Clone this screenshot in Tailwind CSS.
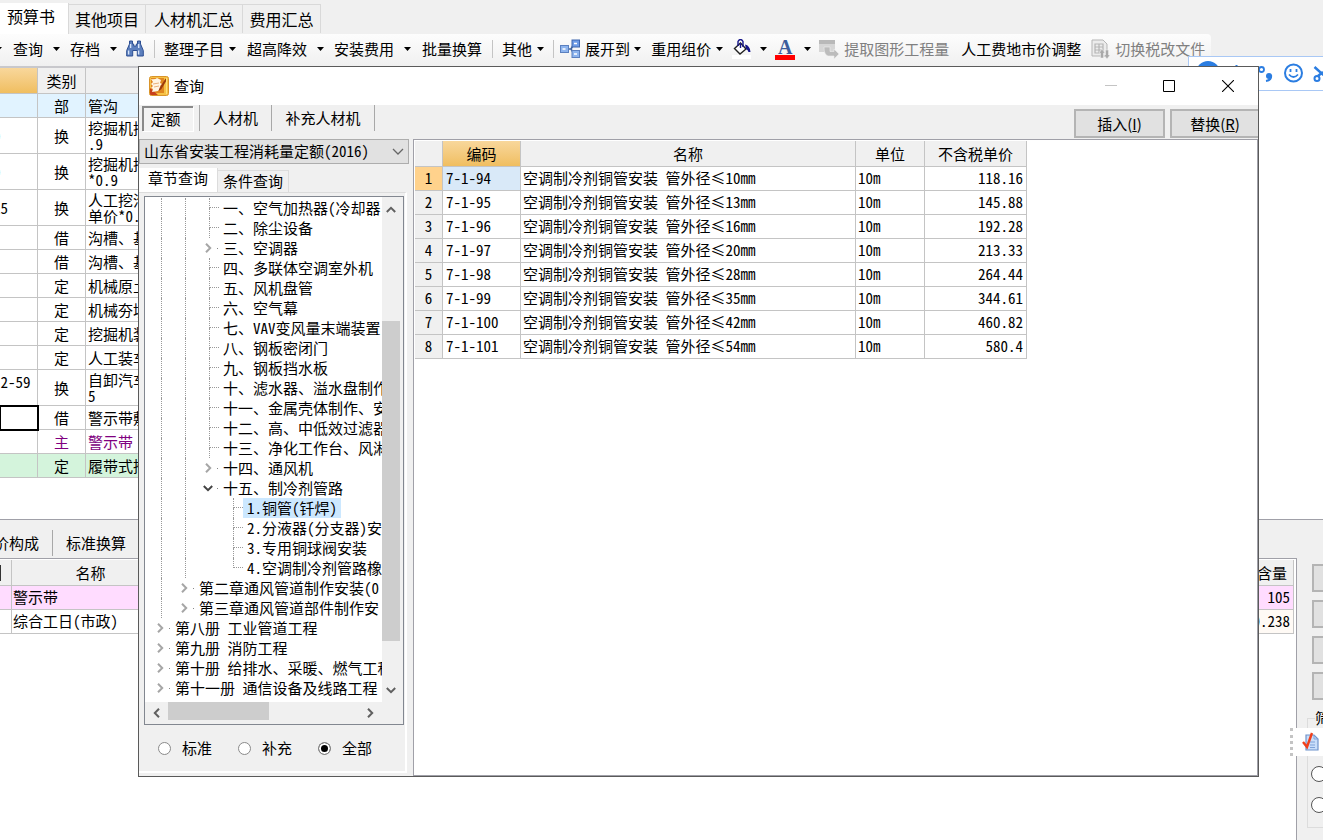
<!DOCTYPE html>
<html lang="zh-CN">
<head>
<meta charset="utf-8">
<title>查询</title>
<script src="https://cdn.jsdelivr.net/npm/@tailwindcss/browser@4"></script>
</head>
<body class="bg-[#f0f0f0] font-['Noto_Sans_CJK_SC',sans-serif] text-[15px] leading-5 text-black">
<svg class="hidden" aria-hidden="true">
  <symbol id="caret" viewBox="0 0 7 4"><path d="M0 0h7L3.5 4z"/></symbol>
  <symbol id="chev" viewBox="0 0 10 10"><path d="M3 0.8 7.2 5 3 9.2" fill="none" stroke="currentColor" stroke-width="2"/></symbol>
</svg>
<div class="relative flex min-h-screen w-full flex-col overflow-hidden">

  <!-- page tabs -->
  <nav class="flex h-[34px] items-end text-[16px]">
    <button class="h-[31px] w-[69px] border-r border-[#d9d9d9] bg-white pr-[6px] pb-[6px] whitespace-nowrap">预算书</button>
    <button class="mb-px h-[29px] w-[77px] border-t border-r border-[#d9d9d9] whitespace-nowrap">其他项目</button>
    <button class="mb-px h-[29px] w-[97px] border-t border-r border-[#d9d9d9] whitespace-nowrap">人材机汇总</button>
    <button class="mb-px h-[29px] w-[78px] border-t border-r border-[#d9d9d9] whitespace-nowrap">费用汇总</button>
  </nav>

  <!-- toolbar -->
  <div class="flex h-8 items-center self-start rounded-r bg-linear-to-b from-[#fdfdfd] to-[#f0f0f0] pr-[6px] pb-[2px] whitespace-nowrap" role="toolbar">
    <svg class="-ml-[5px] h-1 w-[7px]"><use href="#caret"/></svg>
    <button class="ml-[11px] flex items-center gap-[10px]">查询<svg class="h-1 w-[7px]"><use href="#caret"/></svg></button>
    <button class="ml-[10px] flex items-center gap-[10px]">存档<svg class="h-1 w-[7px]"><use href="#caret"/></svg></button>
    <button class="ml-2" aria-label="查找">
      <svg class="block h-5 w-5" viewBox="0 0 20 20"><path d="M4.5 2h3v3h1.2v2h2.600V5h1.200V2h3v3l2.800 6.500V17h-6v-5.500H7.700V17h-6v-5.500L4.500 5z" fill="#5c7fbd" stroke="#2d4f93" stroke-width="1"/><path d="M3.600 11.500v4M13.600 11.500v4M5.600 5v4M13.700 5v4" stroke="#d7e4fa" stroke-width="1.400"/></svg>
    </button>
    <span class="ml-[9px] h-[18px] w-px bg-[#c4c4c4]"></span>
    <button class="ml-[9px] flex items-center gap-[5px]">整理子目<svg class="h-1 w-[7px]"><use href="#caret"/></svg></button>
    <button class="ml-[11px] flex items-center gap-[10px]">超高降效<svg class="h-1 w-[7px]"><use href="#caret"/></svg></button>
    <button class="ml-[10px] flex items-center gap-[10px]">安装费用<svg class="h-1 w-[7px]"><use href="#caret"/></svg></button>
    <button class="ml-[11px]">批量换算</button>
    <span class="ml-[10px] h-[18px] w-px bg-[#c4c4c4]"></span>
    <button class="ml-[9px] flex items-center gap-[5px]">其他<svg class="h-1 w-[7px]"><use href="#caret"/></svg></button>
    <span class="ml-[9px] h-[18px] w-px bg-[#c4c4c4]"></span>
    <button class="ml-[6px] flex items-center gap-[5px]">
      <svg class="h-5 w-5" viewBox="0 0 20 20"><path d="M7 10h4M11 10l3-5M11 10l3 5" stroke="#42659c" stroke-width="1.600" fill="none"/><rect x=".5" y="6.500" width="8" height="7" fill="#8db4ee" stroke="#5b80bf"/><rect x="12" y="1" width="7.500" height="7" fill="#6f9ce6" stroke="#3f66ad"/><rect x="12" y="11.500" width="7.500" height="7" fill="#8db4ee" stroke="#5b80bf"/><path d="M2.500 10h3M14 4.500h3M14 15h3" stroke="#fff" stroke-width="1.500"/></svg>展开到
    </button>
    <svg class="ml-1 h-1 w-[7px]"><use href="#caret"/></svg>
    <button class="ml-[10px] flex items-center gap-[5px]">重用组价<svg class="h-1 w-[7px]"><use href="#caret"/></svg></button>
    <button class="ml-[9px] flex items-center gap-[9px]" aria-label="填充颜色">
      <svg class="h-5 w-[19px]" viewBox="0 0 19 20"><path d="M0 16h19v4H0z" fill="#fff"/><path d="M2.500 9.500 8.500 4l5.500 6-6 5z" fill="#fff" stroke="#222" stroke-width="1.400"/><path d="M6 7V2.500Q7 .500 8.500 .500T11 2.500V8M8.500 4v5" fill="none" stroke="#16168a" stroke-width="1.400"/><path d="M13 5.500q5 1 5.500 7.500h-2q-.5-2-2.500-3z" fill="#16168a"/></svg><svg class="h-1 w-[7px]"><use href="#caret"/></svg>
    </button>
    <button class="ml-2 flex items-center gap-[9px]" aria-label="字体颜色">
      <span class="flex h-[21px] w-5 flex-col items-center border-b-[5px] border-[#ff0000] font-['Liberation_Serif',serif] text-[20px] leading-[17px] font-bold text-[#3d5e9c]">A</span><svg class="h-1 w-[7px]"><use href="#caret"/></svg>
    </button>
    <button class="ml-2 flex items-center gap-[5px] text-[#808080]" disabled>
      <svg class="h-5 w-5" viewBox="0 0 20 20"><path d="M0 1h16v12H0z" fill="#d6d6d6"/><path d="M0 1h16v4H0z" fill="#b9b9b9"/><path d="M5 8h6v4.500h4V10l5 5-5 5v-3H9q-4-1-4-9z" fill="#bcbcbc" stroke="#eee" stroke-width=".6"/></svg>提取图形工程量
    </button>
    <button class="ml-3">人工费地市价调整</button>
    <button class="ml-[10px] flex items-center gap-[5px] text-[#808080]" disabled>
      <svg class="h-5 w-[19px]" viewBox="0 0 19 20"><path d="M1 1h11l4 4v12H1z" fill="#ececec" stroke="#b5b5b5"/><path d="M4 5h8v9H4zM4 8h8M4 11h8M8 5v9" fill="none" stroke="#b5b5b5" stroke-width="1.200"/><path d="m11 10 3 4h-1.500v5h-3v-5H8zM16 20l-3-4h1.500v-5h3v5H19z" fill="#a9a9a9" stroke="#f2f2f2" stroke-width=".5"/></svg>切换税改文件
    </button>
  </div>

  <!-- budget grid -->
  <main class="flex-1 border-t-2 border-[#c8c8cc] bg-white font-['Noto_Sans_Mono_CJK_SC','Noto_Sans_CJK_SC',monospace]">
    <table class="w-2/3 table-fixed border-separate border-spacing-0 leading-4 [&_td]:border-r [&_td]:border-b [&_td]:border-[#c4c4c4] [&_td]:p-0 [&_th]:border-r [&_th]:border-b [&_th]:border-[#c4c4c4] [&_th]:font-normal">
      <colgroup><col class="w-[38px]"><col class="w-12"><col></colgroup>
      <thead><tr class="h-[26px] bg-[#f0f0f0]"><th class="bg-linear-to-b from-[#f8d79b] to-[#f0be5f]"></th><th>类别</th><th></th></tr></thead>
      <tbody id="budget"></tbody>
    </table>
  </main>

  <!-- lower panel -->
  <section class="flex h-[321px] flex-col border-t border-[#a0a0a8]">
    <div class="flex h-[38px] items-center whitespace-nowrap">
      <button class="-ml-[6px] pt-[7px]">价构成</button>
      <span class="mt-2 ml-[13px] h-[26px] w-px bg-[#a8a8a8]"></span>
      <button class="ml-[13px] pt-[7px]">标准换算</button>
    </div>
    <div class="flex flex-1">
      <div class="flex-1 border-t border-r border-[#a0a0a8] bg-white pt-px pr-[2px] font-['Noto_Sans_Mono_CJK_SC','Noto_Sans_CJK_SC',monospace]">
        <table class="w-full table-fixed border-separate border-spacing-0 [&_td]:border-r [&_td]:border-b [&_td]:border-[#c4c4c4] [&_td]:p-0 [&_td]:pb-px [&_th]:border-r [&_th]:border-b [&_th]:border-[#c4c4c4] [&_th]:p-0 [&_th]:font-normal">
          <colgroup><col class="w-3"><col class="w-[158px]"><col><col class="w-[60px]"></colgroup>
          <thead><tr class="h-[26px] bg-[#f0f0f0]"><th><span class="block h-4 w-px bg-[#333]"></span></th><th>名称</th><th></th><th class="text-right"><span class="pr-[6px]">含量</span></th></tr></thead>
          <tbody>
            <tr class="h-6 bg-[#ffdcff]"><td></td><td><span class="pl-px">警示带</span></td><td></td><td class="text-right"><span class="pr-[3px]">105</span></td></tr>
            <tr class="h-6"><td></td><td><span class="pl-px">综合工日(市政)</span></td><td></td><td class="bg-[#fffaf5] text-right"><span class="pr-[3px]">0.238</span></td></tr>
          </tbody>
        </table>
      </div>
      <aside class="flex w-[26px] flex-col gap-2 overflow-hidden pt-[6px] pl-[15px]">
        <button class="h-7 w-20 shrink-0 border-2 border-[#b4b4b4] bg-[#e1e1e1]" aria-label="操作一"></button>
        <button class="h-7 w-20 shrink-0 border-2 border-[#b4b4b4] bg-[#e1e1e1]" aria-label="操作二"></button>
        <button class="h-7 w-20 shrink-0 border-2 border-[#b4b4b4] bg-[#e1e1e1]" aria-label="操作三"></button>
        <button class="h-7 w-20 shrink-0 border-2 border-[#b4b4b4] bg-[#e1e1e1]" aria-label="操作四"></button>
        <fieldset class="-ml-[5px] h-[120px] w-24 shrink-0 border border-[#dcdcdc] pl-[3px]">
          <legend class="ml-1 h-5">筛</legend>
          <input type="radio" name="filter" aria-label="筛选一" class="mt-[38px] block size-4 appearance-none rounded-full border border-[#555] bg-white">
          <input type="radio" name="filter" aria-label="筛选二" class="mt-[15px] block size-4 appearance-none rounded-full border border-[#555] bg-white">
        </fieldset>
      </aside>
    </div>
  </section>

  <!-- floating mini toolbar -->
  <div class="absolute top-[728px] right-0 flex h-7 w-[33px] items-center gap-[9px] bg-white">
    <span class="h-7 border-l-[3px] border-dotted border-[#c4c4c4]"></span>
    <svg class="h-5 w-[18px]" viewBox="0 0 18 20"><path d="M4 3h8l4 4v11H4z" fill="#c9defa" stroke="#6f93cb" stroke-width="1.200"/><path d="M12 3v4h4M8 10h5M8 13h5M8 15.500h5" fill="none" stroke="#7fa3d9"/><path d="m1 10 4 5L10 1" fill="none" stroke="#f0401c" stroke-width="2.400"/></svg>
  </div>

  <!-- input method bar -->
  <div class="absolute top-14 right-0 h-[35px] w-[135px] overflow-hidden border border-r-0 border-[#a9c8f5] bg-white">
    <svg class="block h-[33px] w-[134px]" viewBox="0 0 134 33"><circle cx="19" cy="16" r="12" fill="#2b7de1"/><path d="M47.500 8v4" stroke="#2b7de1" stroke-width="2"/><circle cx="72.500" cy="12.500" r="2.500" fill="none" stroke="#2b7de1" stroke-width="1.800"/><circle cx="80" cy="19" r="3" fill="#2b7de1"/><path d="M82 18q1 5-5 6" fill="none" stroke="#2b7de1" stroke-width="2"/><circle cx="104.500" cy="16" r="8.500" fill="none" stroke="#2b7de1" stroke-width="2"/><path d="M101.500 12v3M107.500 12v3M100 17.500q4.500 5 9 0" fill="none" stroke="#2b7de1" stroke-width="1.800"/><path d="m125.500 10 9 8M134 15l-5 4" stroke="#2b7de1" stroke-width="2.500"/><circle cx="128" cy="21.500" r="2.500" fill="none" stroke="#2b7de1" stroke-width="2"/></svg>
  </div>

  <!-- query dialog -->
  <div role="dialog" aria-labelledby="dlg-title" class="absolute top-[66px] right-16 left-[138px] flex flex-col border border-[#5a5a5a] bg-[#f0f0f0]">
    <header class="flex h-[38px] items-center bg-white pr-6 pb-px pl-[10px]">
      <svg class="h-5 w-5" viewBox="0 0 20 20"><rect x=".5" y=".5" width="19" height="19" rx="2" fill="#f6c246" stroke="#d9942a"/><path d="M2 2h13v15H2z" fill="#e0861f"/><path d="M1 12l8 7H2q-1 0-1-1z" fill="#c8401c"/><path d="M2 3q4 1 6-1l4 2-1 3 2 1-2 2 1 2-3 3-6 1 1-3-2-1 2-2-2-2 2-2z" fill="#fff6e4"/><path d="M4 8l6-1M5 11l5-1" stroke="#e3a060" stroke-width=".8"/><path d="m16.500 2.500-6 9.500-1 3 2.800-1.800L17.800 4z" fill="#9c3a0c"/><path d="M17.500 2v16" stroke="#ffdf7a" stroke-width="1"/></svg>
      <h1 id="dlg-title" class="ml-[5px] flex-1 font-normal">查询</h1>
      <button aria-label="最小化"><svg class="block h-3 w-3" viewBox="0 0 12 12"><path d="M0 5.500h12" stroke="#c4c4c4"/></svg></button>
      <button aria-label="最大化" class="ml-[46px]"><svg class="block h-3 w-3" viewBox="0 0 12 12"><path d="M.5.5h11v11H.5z" fill="none" stroke="#000"/></svg></button>
      <button aria-label="关闭" class="ml-[47px]"><svg class="block h-3 w-3" viewBox="0 0 12 12"><path d="m0 0 12 12M12 0 0 12" stroke="#000" stroke-width="1.100"/></svg></button>
    </header>

    <div class="flex h-[34px] items-start overflow-hidden">
      <button class="mt-px ml-[3px] h-[25px] w-[51px] border-t-2 border-l-2 border-[#8a8a8a] bg-[#f3f3f3] pr-[6px] pb-[2px] whitespace-nowrap shadow-[1px_1px_0_#fff]">定额</button>
      <span class="ml-[6px] h-[26px] w-px bg-[#a8a8a8]"></span>
      <button class="h-[26px] w-[72px] border-r border-[#a8a8a8]">人材机</button>
      <button class="h-[26px] w-[103px] border-r border-[#a8a8a8]">补充人材机</button>
      <button class="mt-1 ml-auto h-[29px] w-[91px] border-2 border-[#b4b4b4] bg-[#e1e1e1]">插入(<u>I</u>)</button>
      <button class="mt-1 ml-[5px] h-[29px] w-[88px] border-2 border-r-0 border-[#b4b4b4] bg-[#e1e1e1]">替换(<u>R</u>)</button>
    </div>

    <div class="flex font-['Noto_Sans_Mono_CJK_SC','Noto_Sans_CJK_SC',monospace]">
      <!-- chapter panel -->
      <div class="mr-1 w-[270px] shrink-0 pb-[3px]">
        <div class="relative">
          <select aria-label="定额库" class="h-[25px] w-full appearance-none border border-[#adadad] bg-[#e1e1e1] pb-[2px] pl-1 leading-5"><option>山东省安装工程消耗量定额(2016)</option></select>
          <svg class="pointer-events-none absolute top-[9px] right-[5px] h-[7px] w-3" viewBox="0 0 12 7"><path d="m1 1 5 5 5-5" fill="none" stroke="#666" stroke-width="1.300"/></svg>
        </div>
        <div class="mt-1 flex items-end">
          <button class="h-6 w-[79px] border-r border-[#dcdcdc] bg-white pb-1 whitespace-nowrap">章节查询</button>
          <button class="h-[22px] w-[71px] border-t border-r border-[#dcdcdc] pb-[2px] whitespace-nowrap">条件查询</button>
        </div>
        <div class="mr-[2px] border-t border-r-2 border-b-2 border-[#dcdcdc] border-r-[#fff] border-b-[#fff] pt-[3px] pr-px pl-[5px]">
          <div class="border border-[#828790] bg-white">
            <div class="flex h-[505px]">
              <ul id="tree" class="min-w-0 flex-1 overflow-hidden pt-px whitespace-nowrap" role="tree"></ul>
              <div class="flex w-[18px] flex-col items-center bg-[#f0f0f0] text-[#606060]">
                <svg class="mt-2 h-[10px] w-[10px] -rotate-90"><use href="#chev"/></svg>
                <div class="mt-[106px] h-80 w-full bg-[#cdcdcd]"></div>
                <svg class="mt-auto mb-[7px] h-[10px] w-[10px] rotate-90"><use href="#chev"/></svg>
              </div>
              <div class="w-[3px] bg-[#f0f0f0]"></div>
            </div>
            <div class="flex h-[22px] items-center bg-[#f0f0f0] pl-[7px] text-[#606060]">
              <svg class="h-[10px] w-[10px] rotate-180"><use href="#chev"/></svg>
              <div class="mb-1 ml-[6px] h-[18px] w-[101px] bg-[#cdcdcd]"></div>
              <svg class="mr-7 ml-auto h-[10px] w-[10px]"><use href="#chev"/></svg>
            </div>
          </div>
          <div class="flex h-[46px] items-center gap-[26px] pl-[14px]">
            <label class="flex items-center gap-[11px]"><input type="radio" name="scope" class="size-[13px] appearance-none rounded-full border border-[#8a8a8a] bg-white">标准</label>
            <label class="flex items-center gap-[11px]"><input type="radio" name="scope" class="size-[13px] appearance-none rounded-full border border-[#8a8a8a] bg-white">补充</label>
            <label class="flex items-center gap-[11px]"><input type="radio" name="scope" checked class="size-[13px] appearance-none rounded-full border border-[#8a8a8a] bg-black shadow-[inset_0_0_0_2px_#fff]">全部</label>
          </div>
        </div>
      </div>

      <!-- result grid -->
      <div class="flex-1 border border-[#a0a0a8] bg-white pt-px pl-px">
        <table class="table-fixed border-separate border-spacing-0 [&_td]:border-r [&_td]:border-b [&_td]:border-[#c4c4c4] [&_td]:pt-0 [&_td]:pb-[2px] [&_th]:border-r [&_th]:border-b [&_th]:border-[#c4c4c4] [&_th]:p-0 [&_th]:font-normal">
          <colgroup><col class="w-7"><col class="w-[78px]"><col class="w-[335px]"><col class="w-[69px]"><col class="w-[102px]"></colgroup>
          <thead><tr class="h-[26px] bg-[#f0f0f0]"><th></th><th class="bg-linear-to-b from-[#f8d79b] to-[#f0be5f]">编码</th><th>名称</th><th>单位</th><th>不含税单价</th></tr></thead>
          <tbody id="results"></tbody>
        </table>
      </div>
    </div>
  </div>
</div>

<script>
const budget = [
  ['', '部', '管沟', 'h-6 bg-[#e1f3ff]'],
  ['0', '换', '挖掘机挖<br>.9', 'h-9'],
  ['0', '换', '挖掘机挖<br>*0.9', 'h-9'],
  ['25', '换', '人工挖沟<br>单价*0.', 'h-9'],
  ['', '借', '沟槽、基', 'h-6'],
  ['', '借', '沟槽、基', 'h-6'],
  ['', '定', '机械原土', 'h-6'],
  ['', '定', '机械夯填', 'h-6'],
  ['', '定', '挖掘机装', 'h-6'],
  ['', '定', '人工装车', 'h-6'],
  ['-2-59', '换', '自卸汽车<br>5', 'h-9'],
  ['', '借', '警示带敷', 'h-6', true],
  ['', '主', '警示带', 'h-6 text-[#800080]'],
  ['', '定', '履带式推', 'h-6 bg-[#d4f4dc]'],
];
document.getElementById('budget').innerHTML = budget.map(([code, kind, name, cls, selected]) => `
  <tr class="${cls}">
    <td class="${selected ? 'outline-2 -outline-offset-1 outline-black' : ''}"><div class="-ml-[7px] ${code.length > 2 ? 'pb-3' : ''}">${code}</div></td>
    <td class="text-center">${kind}</td>
    <td><div class="pl-[2px] leading-4">${name}</div></td>
  </tr>`).join('');

// [depth, state, text]; state: '' leaf, '>' collapsed, 'v' expanded, 'sel' selected leaf, 'last' last leaf
const nodes = [
  [2, '', '一、空气加热器(冷却器'], [2, '', '二、除尘设备'], [2, '>', '三、空调器'],
  [2, '', '四、多联体空调室外机'], [2, '', '五、风机盘管'], [2, '', '六、空气幕'],
  [2, '', '七、VAV变风量末端装置'], [2, '', '八、钢板密闭门'], [2, '', '九、钢板挡水板'],
  [2, '', '十、滤水器、溢水盘制作'], [2, '', '十一、金属壳体制作、安'], [2, '', '十二、高、中低效过滤器'],
  [2, '', '十三、净化工作台、风淋'], [2, '>', '十四、通风机'], [2, 'v', '十五、制冷剂管路'],
  [3, 'sel', '1.铜管(钎焊)'], [3, '', '2.分液器(分支器)安'], [3, '', '3.专用铜球阀安装'],
  [3, 'last', '4.空调制冷剂管路橡'], [1, '>', '第二章通风管道制作安装(0'], [1, '>', '第三章通风管道部件制作安'],
  [0, '>', '第八册 工业管道工程'], [0, '>', '第九册 消防工程'],
  [0, '>', '第十册 给排水、采暖、燃气工程'], [0, '>', '第十一册 通信设备及线路工程'],
];
const guide = '<span class="h-5 w-6 shrink-0 border-l border-dotted border-[#999]"></span>';
const blank = '<span class="h-5 w-6 shrink-0"></span>';
const dot = '<span class="ml-1 size-px bg-[#888]"></span>';
function elbow(state) {
  if (state === '>') return `<span class="-ml-[6px] flex w-4 shrink-0 items-center text-[#a6a6a6]"><svg class="h-[10px] w-[10px]"><use href="#chev"/></svg>${dot}</span>`;
  if (state === 'v') return `<span class="-ml-[6px] flex w-4 shrink-0 items-center text-[#444]"><svg class="h-[10px] w-[10px] rotate-90"><use href="#chev"/></svg>${dot}</span>`;
  return `<span class="flex h-5 w-[10px] shrink-0 flex-col"><span class="h-[10px] border-b border-l border-dotted border-[#999]"></span>${state === 'last' ? '' : '<span class="h-[10px] border-l border-dotted border-[#999]"></span>'}</span>`;
}
document.getElementById('tree').innerHTML = nodes.map(([depth, state, text]) => {
  const guides = (depth > 0 ? guide : '') + (depth > 1 ? guide : '') + (depth > 2 ? blank : '');
  const hl = state === 'sel' ? 'bg-[#cce8ff] px-1' : 'px-1';
  return `<li role="treeitem" class="flex h-5 items-center pl-4">${guides}${elbow(state)}<span class="${hl}">${text}</span></li>`;
}).join('');

const results = [
  ['7-1-94', '10', '118.16'], ['7-1-95', '13', '145.88'], ['7-1-96', '16', '192.28'], ['7-1-97', '20', '213.33'],
  ['7-1-98', '28', '264.44'], ['7-1-99', '35', '344.61'], ['7-1-100', '42', '460.82'], ['7-1-101', '54', '580.4'],
];
document.getElementById('results').innerHTML = results.map(([code, d, price], i) => `
  <tr class="h-6">
    <td class="px-0 text-center ${i ? 'bg-[#f0f0f0]' : 'bg-[#ffd28c]'}">${i + 1}</td>
    <td class="px-[3px] ${i ? '' : 'bg-[#d9e9f8]'}">${code}</td>
    <td class="px-[2px] whitespace-nowrap">空调制冷剂铜管安装 管外径≤${d}mm</td>
    <td class="px-[2px]">10m</td>
    <td class="px-[3px] text-right">${price}</td>
  </tr>`).join('');
</script>
</body>
</html>
